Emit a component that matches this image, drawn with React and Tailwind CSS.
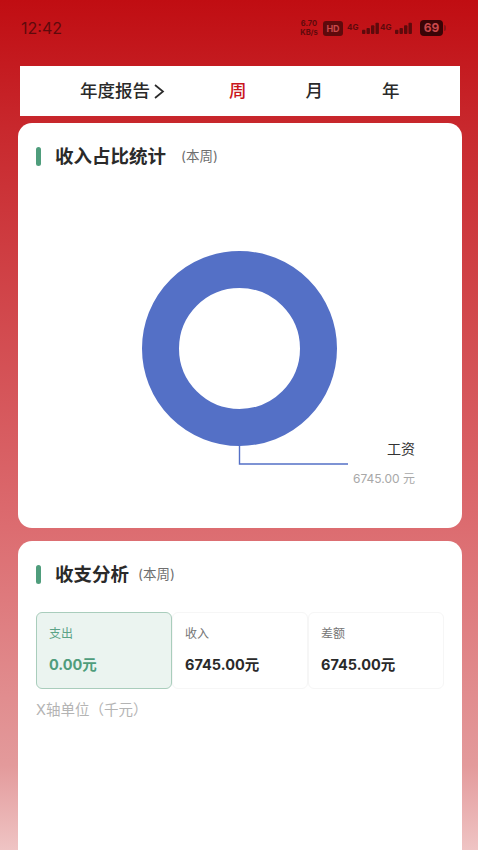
import React from "react";

const FONT = { fontFamily: 'Inter, "Noto Sans CJK SC", sans-serif' };

const Signal = () => (
  <svg width="18" height="13" viewBox="0 0 20 13" fill="#5e0a0c">
    <rect x="0" y="8" width="3.8" height="4.5" rx="1" />
    <rect x="5" y="6" width="3.8" height="6.5" rx="1" />
    <rect x="10" y="3" width="3.8" height="9.5" rx="1" />
    <rect x="15" y="0" width="3.8" height="12.5" rx="1" />
  </svg>
);

const SectionTitle = ({ title, sub, gap }) => (
  <div className="flex items-center">
    <div className="w-[5px] h-[19px] rounded-sm bg-[#4f9d7c]" />
    <h2 className="ml-[14px] text-[18.5px] leading-[24px] font-semibold text-[#2a2a2a]">{title}</h2>
    <span className={`${gap} text-[13.5px] leading-[24px] text-[#6f6f6f]`}>{sub}</span>
  </div>
);

const Stat = ({ label, value, active }) => (
  <div
    className={
      active
        ? "h-[77px] pl-[12px] pt-[12px] rounded-md border border-[#a9cdbc] bg-[#ebf4f0] text-[#4f9d7c]"
        : "h-[77px] pl-[12px] pt-[12px] rounded-md border border-[#f6f6f6] bg-white text-[#2a2a2a]"
    }
  >
    <div className={active ? "text-[12px] leading-[18px] text-[#5ba386]" : "text-[12px] leading-[18px] text-[#757575]"}>{label}</div>
    <div className="mt-[11px] text-[14.5px] leading-[22px] font-bold">{value}</div>
  </div>
);

export default function App() {
  return (
    <div
      style={FONT}
      className="h-[850px] w-[478px] overflow-hidden bg-[linear-gradient(to_bottom,#c00d12_0%,#c8282d_15%,#dc6c70_62%,#e39a9b_90%,#efc4c4_100%)]"
    >
      {/* status bar */}
      <div className="h-[66px] flex items-start justify-between pl-[21px] pr-[26px] pt-[18px] text-[#5e0a0c]">
        <span className="text-[16px] leading-[20px]">12:42</span>
        <div className="flex items-center h-[20px]">
          <div className="w-[22px] text-[7.5px] leading-[9px] font-bold text-center whitespace-nowrap">
            <div>6.70</div>
            <div>KB/s</div>
          </div>
          <div className="ml-[3px] w-[20px] h-[15px] rounded-[3px] bg-[#5e0a0c] text-[#c9484b] text-[9px] leading-[15px] font-bold text-center">HD</div>
          <div className="ml-[4px] flex items-end">
            <span className="w-[15px] text-[8px] leading-[10px] font-bold self-start">4G</span>
            <Signal />
          </div>
          <div className="flex items-end">
            <span className="w-[15px] text-[8px] leading-[10px] font-bold self-start">4G</span>
            <Signal />
          </div>
          <div className="ml-[7px] w-[23px] h-[16px] rounded-[4px] bg-[#3a0406] text-[#c9484b] text-[12px] leading-[16px] font-bold text-center">69</div>
          <div className="ml-[1px] mr-[6px] w-[2px] h-[6px] rounded-r-sm bg-[#8a1216]" />
        </div>
      </div>

      {/* period tabs */}
      <div className="ml-[20px] w-[440px] h-[50px] bg-white flex items-center text-[17.5px] font-medium text-[#2a2a2a]">
        <div className="ml-[60px] flex items-center w-[149px]">
          年度报告
          <svg className="ml-[3px]" width="12" height="17" viewBox="0 0 12 17" fill="none" stroke="#2a2a2a" strokeWidth="1.7">
            <path d="M2 2 L10 8.5 L2 15" />
          </svg>
        </div>
        <span className="text-[#c9161c]">周</span>
        <span className="ml-[59px]">月</span>
        <span className="ml-[59px]">年</span>
      </div>

      <div className="ml-[18px] w-[444px] mt-[7px] flex flex-col gap-[13px]">
        {/* income share card */}
        <section className="h-[405px] rounded-[14px] bg-white px-[18px] pt-[21px]">
          <SectionTitle title="收入占比统计" sub="(本周)" gap="ml-[15px]" />
          <div className="relative">
            <svg width="408" height="340" viewBox="0 0 408 340" className="block">
              <circle cx="203.5" cy="180.5" r="79" fill="none" stroke="#5470c6" strokeWidth="37" />
              <path d="M203.5 277 V296 H312" fill="none" stroke="#5470c6" strokeWidth="1.4" />
            </svg>
            <div className="absolute right-[29px] top-[271px] text-[14px] leading-[20px] text-[#333]">工资</div>
            <div className="absolute right-[29px] top-[302px] text-[12px] leading-[18px] text-[#a8a8a8]">6745.00 元</div>
          </div>
        </section>

        {/* income and expense card */}
        <section className="h-[400px] rounded-[14px] bg-white px-[18px] pt-[21px]">
          <SectionTitle title="收支分析" sub="(本周)" gap="ml-[9px]" />
          <div className="mt-[26px] grid grid-cols-3">
            <Stat label="支出" value="0.00元" active />
            <Stat label="收入" value="6745.00元" />
            <Stat label="差额" value="6745.00元" />
          </div>
          <div className="mt-[11px] text-[14.5px] leading-[20px] text-[#b4b4b4]">X轴单位（千元）</div>
        </section>
      </div>
    </div>
  );
}
